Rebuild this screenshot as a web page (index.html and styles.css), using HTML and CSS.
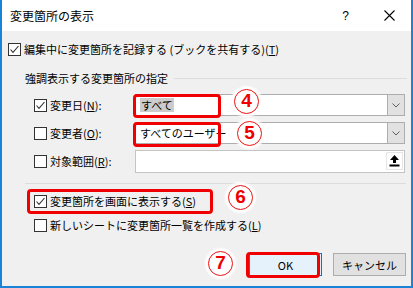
FILE: index.html
```html
<!DOCTYPE html>
<html lang="ja">
<head>
<meta charset="utf-8">
<link rel="stylesheet" href="styles.css">
</head>
<body>
<div class="window">
  <div class="titlebar">
    <span class="title">変更箇所の表示</span>
    <span class="help">?</span>
    <span class="close"><svg width="11" height="11" viewBox="0 0 11 11"><path d="M0.5 0.5 L10.5 10.5 M10.5 0.5 L0.5 10.5" stroke="#000" stroke-width="1.1" fill="none"/></svg></span>
  </div>
  <div class="body">
    <div class="check-row main">
      <span class="box"><svg width="11" height="11" viewBox="0 0 11 11"><polyline points="1.5,5.5 4,8.3 9.5,2" stroke="#333" stroke-width="1.1" fill="none"/></svg></span>
      <span class="label">編集中に変更箇所を記録する (ブックを共有する)(<u>T</u>)</span>
    </div>

    <div class="group-head">
      <span class="group-title">強調表示する変更箇所の指定</span>
      <span class="group-line"></span>
    </div>

    <div class="fields">
      <div class="field-row">
        <div class="field-label">
          <span class="box"><svg width="11" height="11" viewBox="0 0 11 11"><polyline points="1.5,5.5 4,8.3 9.5,2" stroke="#333" stroke-width="1.1" fill="none"/></svg></span>
          <span class="label">変更日(<u>N</u>):</span>
        </div>
        <div class="combo">
          <span class="value"><span class="selected">すべて</span></span>
          <span class="drop"><svg width="8" height="5" viewBox="0 0 8 5"><polyline points="0.5,0.5 4,4 7.5,0.5" stroke="#606060" stroke-width="1" fill="none"/></svg></span>
        </div>
      </div>
      <div class="field-row">
        <div class="field-label">
          <span class="box"></span>
          <span class="label">変更者(<u>O</u>):</span>
        </div>
        <div class="combo">
          <span class="value">すべてのユーザー</span>
          <span class="drop"><svg width="8" height="5" viewBox="0 0 8 5"><polyline points="0.5,0.5 4,4 7.5,0.5" stroke="#606060" stroke-width="1" fill="none"/></svg></span>
        </div>
      </div>
      <div class="field-row">
        <div class="field-label">
          <span class="box"></span>
          <span class="label">対象範囲(<u>R</u>):</span>
        </div>
        <div class="textbox">
          <span class="value"></span>
          <span class="collapse"><svg width="11" height="13" viewBox="0 0 11 13"><polygon points="5.5,1 10,6 7,6 7,9 4,9 4,6 1,6" fill="#000"/><rect x="0.5" y="10.5" width="10" height="2" fill="#000"/></svg></span>
        </div>
      </div>
    </div>

    <div class="separator"></div>

    <div class="check-row opt">
      <span class="box"><svg width="11" height="11" viewBox="0 0 11 11"><polyline points="1.5,5.5 4,8.3 9.5,2" stroke="#333" stroke-width="1.1" fill="none"/></svg></span>
      <span class="label">変更箇所を画面に表示する(<u>S</u>)</span>
    </div>
    <div class="check-row opt second">
      <span class="box"></span>
      <span class="label">新しいシートに変更箇所一覧を作成する(<u>L</u>)</span>
    </div>

    <div class="buttons">
      <button class="btn default">OK</button>
      <button class="btn">キャンセル</button>
    </div>
  </div>

  <span class="mark mark-date"></span>
  <span class="mark mark-user"></span>
  <span class="mark mark-show"></span>
  <span class="mark mark-ok"></span>

  <span class="num num-4">4</span>
  <span class="num num-5">5</span>
  <span class="num num-6">6</span>
  <span class="num num-7">7</span>
</div>
</body>
</html>
```

FILE: styles.css
```css
* { box-sizing: border-box; }

html, body {
  margin: 0;
  padding: 0;
  background: #ffffff;
}

body {
  font-family: "Noto Sans CJK JP", "Noto Sans", sans-serif;
  font-size: 11px;
  color: #000;
}

.window {
  position: relative;
  width: 413px;
  height: 288px;
  display: flex;
  flex-direction: column;
  border-left: 2px solid #1883d7;
  border-right: 2px solid #1883d7;
  border-bottom: 2px solid #1883d7;
  background: #f0f0f0;
  overflow: hidden;
}

.titlebar {
  height: 31px;
  flex: none;
  background: #ffffff;
  display: flex;
  align-items: center;
  padding-left: 8px;
}

.title {
  font-size: 12px;
  line-height: 14px;
  flex: 1;
}

.help {
  font-family: "Liberation Sans", sans-serif;
  font-size: 12px;
  line-height: 14px;
  margin-right: 35px;
}

.close {
  display: flex;
  width: 11px;
  height: 11px;
  margin-right: 16px;
  margin-top: -1px;
}

.body {
  flex: 1;
  display: flex;
  flex-direction: column;
}

.check-row {
  display: flex;
  align-items: center;
  height: 18px;
}

.box {
  width: 13px;
  height: 13px;
  flex: none;
  border: 1px solid #333333;
  background: #ffffff;
  display: flex;
  align-items: center;
  justify-content: center;
}

.label {
  line-height: 14px;
  white-space: nowrap;
  margin-left: 3px;
}

.main {
  margin-top: 9px;
  padding-left: 6px;
}

.group-head {
  display: flex;
  align-items: center;
  height: 16px;
  margin-top: 12px;
  margin-left: 23px;
  margin-right: 4px;
}

.group-title {
  line-height: 14px;
  white-space: nowrap;
}

.group-line {
  flex: 1;
  height: 1px;
  background: #dcdcdc;
  margin-left: 6px;
}

.fields {
  margin-top: 8px;
  display: flex;
  flex-direction: column;
  gap: 6px;
  padding-left: 32px;
}

.field-row {
  display: flex;
  align-items: center;
  height: 22px;
}

.field-label {
  width: 101px;
  flex: none;
  display: flex;
  align-items: center;
}

.combo,
.textbox {
  width: 270px;
  height: 22px;
  display: flex;
  background: #ffffff;
  border: 1px solid #adadad;
}

.textbox {
  border-color: #c4c4c4;
  height: 23px;
}

.value {
  flex: 1;
  display: flex;
  align-items: center;
  padding-left: 4px;
  line-height: 14px;
  white-space: nowrap;
}

.selected {
  background: #cccccc;
  padding: 0 1px;
}

.drop {
  width: 17px;
  flex: none;
  background: #e1e1e1;
  border-left: 1px solid #adadad;
  display: flex;
  align-items: center;
  justify-content: center;
}

.collapse {
  width: 17px;
  height: 18px;
  margin: 1px 1px 0 0;
  flex: none;
  background: #ffffff;
  border: 1px solid #e6e6e6;
  display: flex;
  align-items: center;
  justify-content: center;
}

.separator {
  margin-top: 11px;
  margin-left: 23px;
  width: 381px;
  height: 1px;
  background: #dcdcdc;
}

.opt {
  padding-left: 32px;
  margin-top: 8px;
}

.opt.second {
  margin-top: 6px;
}

.buttons {
  margin-top: 19px;
  display: flex;
  justify-content: flex-end;
  gap: 11px;
  padding-right: 5px;
}

.btn {
  width: 73px;
  height: 23px;
  font-family: "Noto Sans CJK JP", sans-serif;
  font-size: 11px;
  font-weight: normal;
  line-height: 14px;
  color: #000;
  background: #e1e1e1;
  border: 1px solid #adadad;
  padding: 0;
}

.btn.default {
  background: #e5f1fb;
  border: 1px solid #0078d7;
}

/* annotations */
.mark {
  position: absolute;
  border: 3px solid #f00000;
  border-radius: 4px;
}

.mark-date { left: 131px; top: 94px; width: 88px; height: 24px; }
.mark-user { left: 131px; top: 122px; width: 88px; height: 25px; }
.mark-show { left: 25px; top: 189px; width: 186px; height: 25px; }
.mark-ok   { left: 244px; top: 252px; width: 74px; height: 26px; }

.num {
  position: absolute;
  width: 25px;
  height: 25px;
  border-radius: 50%;
  border: 1.5px solid #ee1111;
  background: #ffffff;
  box-shadow: 0 0 2px 3px rgba(255, 255, 255, 0.95);
  color: #ee0000;
  font-family: "Liberation Sans", sans-serif;
  font-weight: bold;
  font-size: 19px;
  line-height: 22px;
  text-align: center;
}

.num-4 { left: 232px; top: 89px; }
.num-5 { left: 235px; top: 121px; }
.num-6 { left: 226px; top: 185px; }
.num-7 { left: 206px; top: 251px; }
```
